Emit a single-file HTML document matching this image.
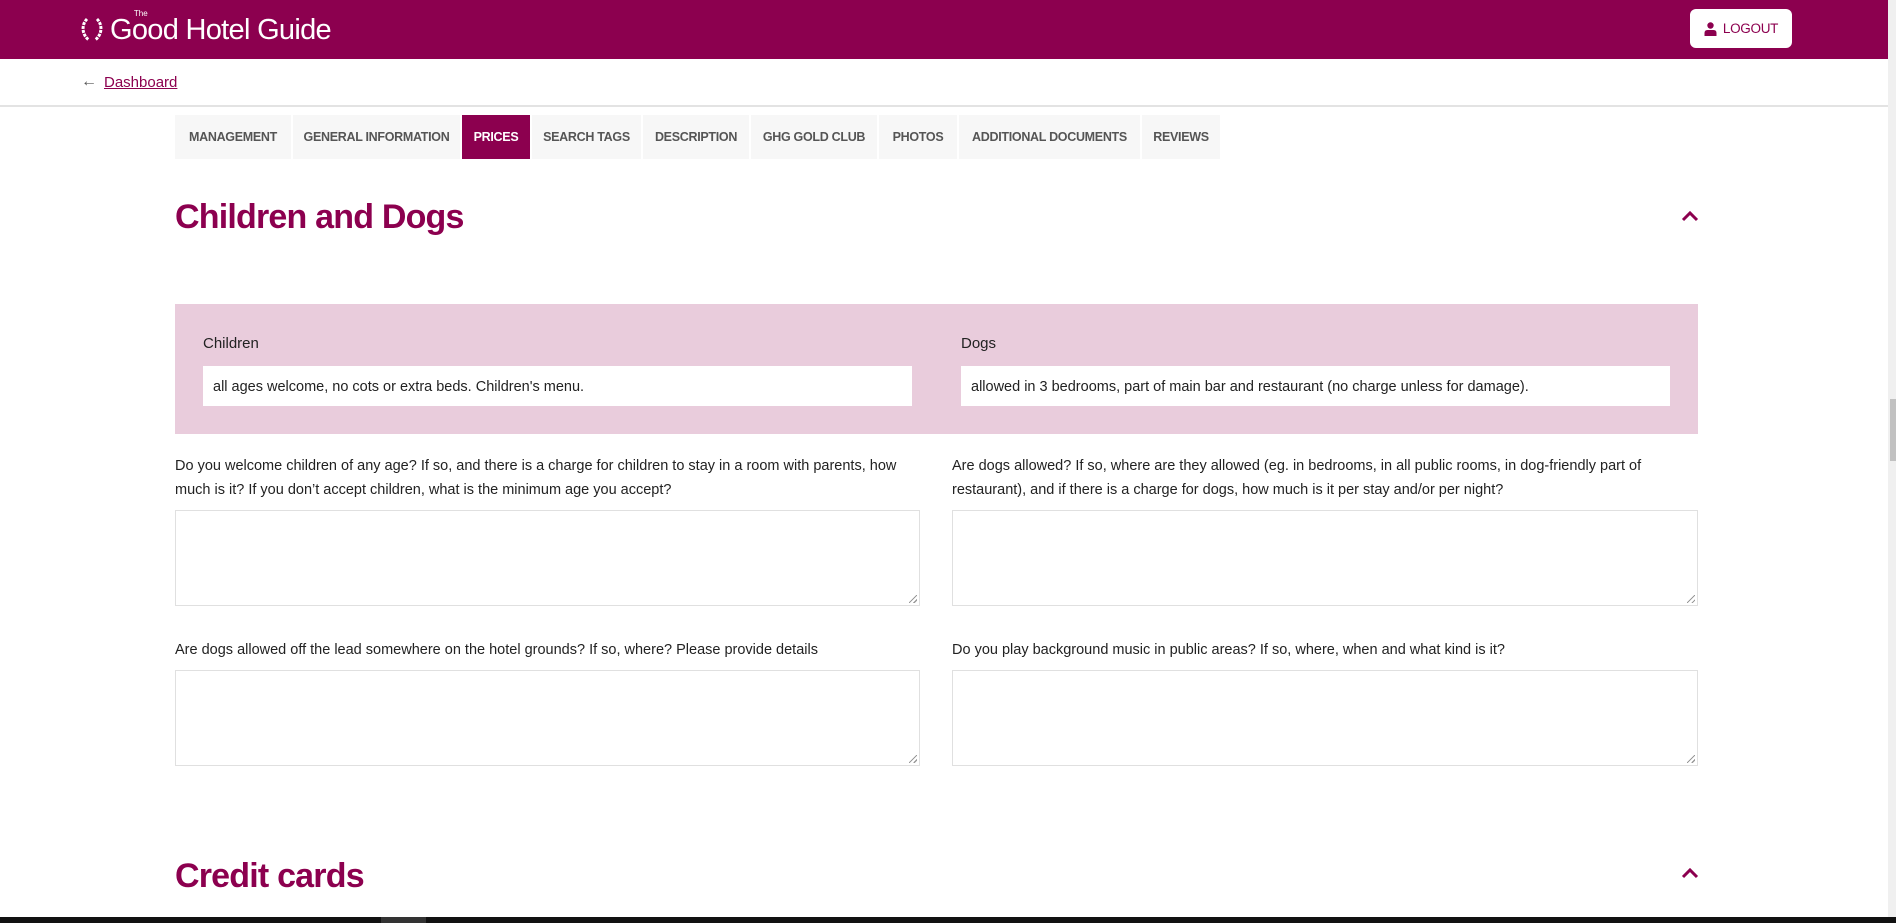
<!DOCTYPE html>
<html><head><meta charset="utf-8"><style>
*{box-sizing:border-box;margin:0;padding:0}
body{width:1896px;height:923px;overflow:hidden;background:#fff;font-family:"Liberation Sans",sans-serif;position:relative;color:#222}
.abs{position:absolute}
.hdr{left:0;top:0;width:1888px;height:59px;background:#8c004f}
.logo{left:110px;top:14px;color:#fff;font-size:29px;letter-spacing:-0.7px}
.logout{left:1690px;top:9px;width:102px;height:39px;background:#fff;border-radius:6px;color:#8c004f;font-size:13.5px;display:flex;align-items:center;justify-content:center;gap:6px;letter-spacing:-0.3px}
.dash{left:104px;top:74px;font-size:15px;color:#8c004f;text-decoration:underline}
.sep{left:0;top:105px;width:1888px;height:2px;background:#e3e3e3}
.tabs{left:175px;top:115px;height:44px;display:flex}
.tab{height:44px;background:#f7f7f7;color:#555;font-size:12.5px;font-weight:bold;display:flex;align-items:center;justify-content:center;margin-right:2px;letter-spacing:-0.3px}
.tab.on{background:#8c004f;color:#fff}
h2{position:absolute;left:175px;color:#8c004f;font-size:34px;font-weight:bold;letter-spacing:-0.8px}
.pink{left:175px;top:304px;width:1523px;height:130px;background:#e9ccdc}
.lbl{font-size:15px;color:#222}
.inp{background:#fff;height:40px;width:709px;font-size:14.5px;padding:13px 10px 0;color:#222}
.q{font-size:14.5px;line-height:24px;color:#222;width:745px}
.ta{border:1px solid #e0e0e0;width:745px;height:96px;background:#fff}
.ta::after{content:"";position:absolute;right:2px;bottom:2px;width:8px;height:8px;background:linear-gradient(135deg,transparent 45%,#999 45%,#999 55%,transparent 55%,transparent 75%,#999 75%,#999 85%,transparent 85%)}
.sb{left:1888px;top:0;width:8px;height:917px;background:#f0f0f0}
</style></head><body>
<div class="abs hdr"></div>
<svg class="abs" style="left:80px;top:17px" width="24" height="26" viewBox="0 0 24 26"><path d="M7 2 C1 8 2 18 9 23 M17 2 C23 8 22 18 15 23" stroke="#fff" stroke-width="3" fill="none" stroke-dasharray="3 1"/></svg>
<div class="abs logo">G<span style="position:relative">o<span style="position:absolute;left:2px;top:-5px;font-size:8px;letter-spacing:0">The</span></span>od Hotel Guide</div>
<div class="abs logout"><svg width="13" height="14" viewBox="0 0 13 14"><circle cx="6.5" cy="3.5" r="3.2" fill="#8c004f"/><path d="M0.5 14 V11 Q0.5 8 3.5 8 H9.5 Q12.5 8 12.5 11 V14Z" fill="#8c004f"/></svg>LOGOUT</div>
<div class="abs" style="left:81px;top:73px;font-size:16px;color:#555">←</div>
<div class="abs dash">Dashboard</div>
<div class="abs sep"></div>
<div class="abs tabs">
<div class="tab" style="width:116px">MANAGEMENT</div>
<div class="tab" style="width:167px">GENERAL INFORMATION</div>
<div class="tab on" style="width:68px">PRICES</div>
<div class="tab" style="width:109px">SEARCH TAGS</div>
<div class="tab" style="width:106px">DESCRIPTION</div>
<div class="tab" style="width:126px">GHG GOLD CLUB</div>
<div class="tab" style="width:78px">PHOTOS</div>
<div class="tab" style="width:181px">ADDITIONAL DOCUMENTS</div>
<div class="tab" style="width:78px">REVIEWS</div>
</div>
<h2 style="top:198px">Children and Dogs</h2>
<svg class="abs" style="left:1681px;top:209px" width="18" height="14" viewBox="0 0 18 14"><path d="M2 11 L9 4 L16 11" stroke="#8c004f" stroke-width="3" fill="none"/></svg>
<div class="abs pink"></div>
<div class="abs lbl" style="left:203px;top:335px">Children</div>
<div class="abs inp" style="left:203px;top:366px">all ages welcome, no cots or extra beds. Children's menu.</div>
<div class="abs lbl" style="left:961px;top:335px">Dogs</div>
<div class="abs inp" style="left:961px;top:366px">allowed in 3 bedrooms, part of main bar and restaurant (no charge unless for damage).</div>
<div class="abs q" style="left:175px;top:454px">Do you welcome children of any age? If so, and there is a charge for children to stay in a room with parents, how much is it? If you don’t accept children, what is the minimum age you accept?</div>
<div class="abs q" style="left:952px;top:454px">Are dogs allowed? If so, where are they allowed (eg. in bedrooms, in all public rooms, in dog-friendly part of restaurant), and if there is a charge for dogs, how much is it per stay and/or per night?</div>
<div class="abs ta" style="left:175px;top:510px"></div>
<div class="abs ta" style="left:952px;top:510px;width:746px"></div>
<div class="abs q" style="left:175px;top:638px">Are dogs allowed off the lead somewhere on the hotel grounds? If so, where? Please provide details</div>
<div class="abs q" style="left:952px;top:638px">Do you play background music in public areas? If so, where, when and what kind is it?</div>
<div class="abs ta" style="left:175px;top:670px"></div>
<div class="abs ta" style="left:952px;top:670px;width:746px"></div>
<h2 style="top:857px">Credit cards</h2>
<svg class="abs" style="left:1681px;top:866px" width="18" height="14" viewBox="0 0 18 14"><path d="M2 11 L9 4 L16 11" stroke="#8c004f" stroke-width="3" fill="none"/></svg>
<div class="abs sb"></div>
<div class="abs" style="left:1890px;top:399px;width:6px;height:62px;background:#c1c1c1"></div>
<div class="abs" style="left:0;top:917px;width:1896px;height:6px;background:#111"></div>
<div class="abs" style="left:381px;top:917px;width:45px;height:6px;background:#333"></div>
</body></html>
